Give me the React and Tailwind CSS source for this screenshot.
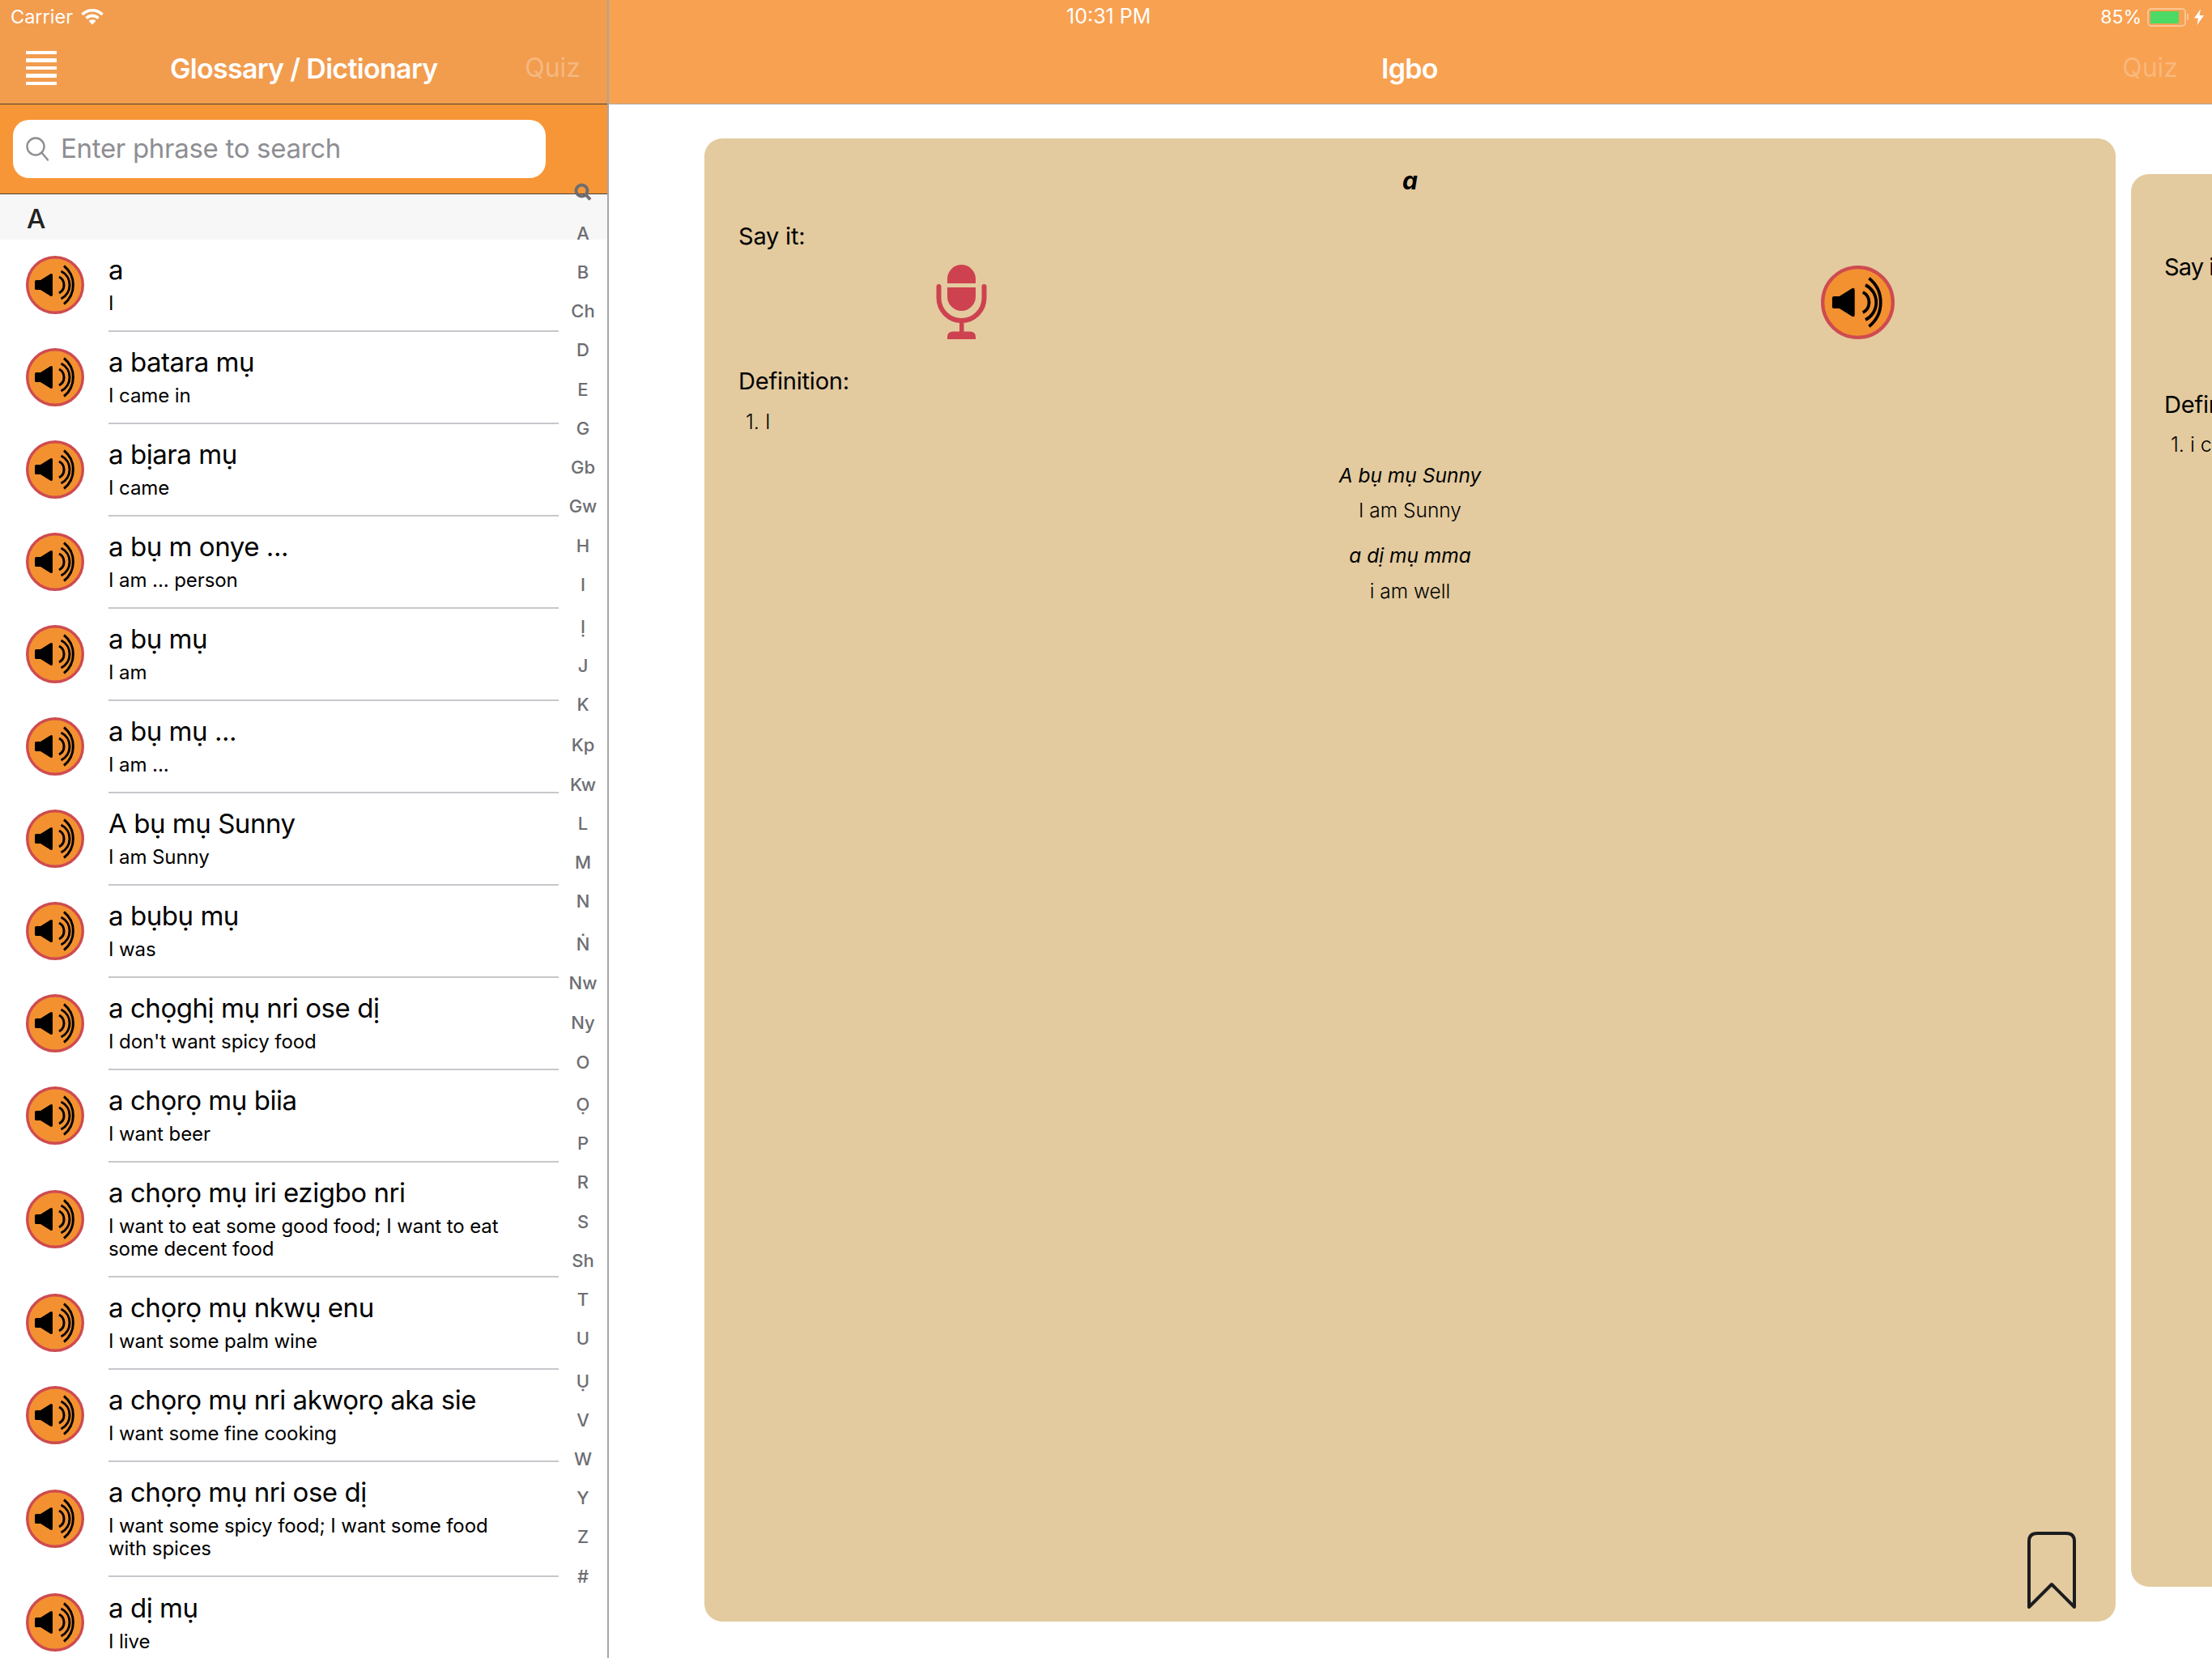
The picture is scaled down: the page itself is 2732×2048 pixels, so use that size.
import React from "react";

const rows = [
  { t: "a", s: ["I"], h: "h-[114px]" },
  { t: "a batara mụ", s: ["I came in"], h: "h-[114px]" },
  { t: "a bịara mụ", s: ["I came"], h: "h-[114px]" },
  { t: "a bụ m onye ...", s: ["I am ... person"], h: "h-[114px]" },
  { t: "a bụ mụ", s: ["I am"], h: "h-[114px]" },
  { t: "a bụ mụ ...", s: ["I am ..."], h: "h-[114px]" },
  { t: "A bụ mụ Sunny", s: ["I am Sunny"], h: "h-[114px]" },
  { t: "a bụbụ mụ", s: ["I was"], h: "h-[114px]" },
  { t: "a chọghị mụ nri ose dị", s: ["I don't want spicy food"], h: "h-[114px]" },
  { t: "a chọrọ mụ biia", s: ["I want beer"], h: "h-[114px]" },
  { t: "a chọrọ mụ iri ezigbo nri", s: ["I want to eat some good food; I want to eat", "some decent food"], h: "h-[142px]" },
  { t: "a chọrọ mụ nkwụ enu", s: ["I want some palm wine"], h: "h-[114px]" },
  { t: "a chọrọ mụ nri akwọrọ aka sie", s: ["I want some fine cooking"], h: "h-[114px]" },
  { t: "a chọrọ mụ nri ose dị", s: ["I want some spicy food; I want some food", "with spices"], h: "h-[142px]" },
  { t: "a dị mụ", s: ["I live"], h: "h-[114px]" },
];

const index = ["A","B","Ch","D","E","G","Gb","Gw","H","I","Ị","J","K","Kp","Kw","L","M","N","Ṅ","Nw","Ny","O","Ọ","P","R","S","Sh","T","U","Ụ","V","W","Y","Z","#"];
const dotted = ["Ị", "Ṅ", "Ọ", "Ụ"];
const wide = ["Kp", "Ny"];

function Speaker({ className }) {
  return (
    <svg viewBox="0 0 72 72" className={className}>
      <circle cx="36" cy="36" r="34.3" fill="#F39130" stroke="#CE4B50" strokeWidth="3.4" />
      <path d="M11 31.5 Q11 30 13 30 L18 30 L30 22.5 Q33 21 33 24 L33 48 Q33 51 30 49.5 L18 42 L13 42 Q11 42 11 40.5 Z" fill="#000" />
      <g fill="none" stroke="#000" strokeWidth="3">
        <path d="M41 26 A11.3 11.3 0 0 1 41 46" />
        <path d="M43.5 19 A19 19 0 0 1 43.5 53" />
        <path d="M47 12.5 A30 30 0 0 1 47 59.5" />
      </g>
    </svg>
  );
}

function Mic() {
  return (
    <svg viewBox="0 0 64 92" className="w-[64px] h-[92px]" fill="#CE4250">
      <path d="M14 23 V17.5 A17.5 17.5 0 0 1 49 17.5 V23 Z" />
      <path d="M14 28 H49 V39.5 A17.5 17.5 0 0 1 14 39.5 Z" />
      <path d="M3.5 27 V41 A28 28 0 0 0 59.5 41 V27" fill="none" stroke="#CE4250" strokeWidth="6" strokeLinecap="round" />
      <rect x="29" y="70" width="5.5" height="14" />
      <path d="M14 92 V89 Q14 82.5 21 82.5 H42 Q49 82.5 49 89 V92 Z" />
    </svg>
  );
}

function Bookmark() {
  return (
    <svg viewBox="0 0 60 96" className="w-[60px] h-[96px]" fill="none" stroke="#1D1D20" strokeWidth="4" strokeLinejoin="round" strokeLinecap="round">
      <path d="M2 93 V12 Q2 2 12 2 H48 Q58 2 58 12 V93 L30 65 Z" />
    </svg>
  );
}

function Hamburger() {
  return (
    <div className="flex flex-col gap-[5px] w-[38px]">
      {[0, 1, 2, 3, 4].map((i) => (
        <div key={i} className="h-[4.5px] bg-white" />
      ))}
    </div>
  );
}

export default function App() {
  return (
    <div className="relative w-[2732px] h-[2048px] overflow-hidden flex bg-white text-black font-['Inter','Noto_Sans',sans-serif]">
      {/* Sidebar */}
      <div className="relative w-[752px] h-full border-r-2 border-[#A6A6A6] flex flex-col overflow-hidden shrink-0">
        <div className="h-[129px] bg-[#F29C4E] border-b border-[#4A3F35] flex flex-col shrink-0">
          <div className="h-[42px] flex items-center pl-[13px] text-white text-[23.5px] gap-[10px]">
            <span>Carrier</span>
            <svg viewBox="0 0 28 20" className="w-[28px] h-[20px]" fill="none" stroke="#fff" strokeWidth="3.6">
              <path d="M1.5 7 A17.5 17.5 0 0 1 26.5 7" />
              <path d="M6.5 11.5 A10.5 10.5 0 0 1 21.5 11.5" />
              <path d="M14 19.5 L9.5 14.8 A6.5 6.5 0 0 1 18.5 14.8 Z" fill="#fff" stroke="none" />
            </svg>
          </div>
          <div className="flex-1 flex items-center pl-[32px] pb-[2px] relative">
            <Hamburger />
            <span className="ml-[140px] text-white text-[34px] font-semibold tracking-[-0.7px]">Glossary / Dictionary</span>
            <span className="ml-auto mr-[33px] text-[32px] text-white/30">Quiz</span>
          </div>
        </div>
        <div className="h-[111px] bg-[#F79637] border-b border-[#4A3F35] shrink-0 flex items-start pl-[16px] pt-[19px]">
          <div className="w-[658px] h-[72px] bg-white rounded-[20px] flex items-center pl-[16px]">
            <svg viewBox="0 0 28 30" className="w-[28px] h-[30px]" fill="none" stroke="#8E8E93" strokeWidth="2.4">
              <circle cx="12" cy="12" r="10.5" />
              <path d="M19.5 19.5 L27 28.5" strokeLinecap="round" />
            </svg>
            <span className="ml-[15px] text-[33px] text-[#8E8E93] tracking-[-0.3px]">Enter phrase to search</span>
          </div>
        </div>
        <div className="h-[56px] bg-[#F7F7F7] shrink-0 flex items-center pl-[33px] pt-[5px] text-[33px] font-medium text-[#222]">A</div>
        {rows.map((r, i) => (
          <div key={i} className={`flex shrink-0 pl-[32px] ${r.h}`}>
            <Speaker className="w-[72px] h-[72px] self-center shrink-0 mb-[3px]" />
            <div className={`ml-[30px] w-[556px] h-full flex flex-col justify-center pb-[3.5px] ${i < rows.length - 1 ? "border-b-2 border-[#C8C7CC]" : ""}`}>
              <div className="text-[33px] leading-[44px] tracking-[-0.45px] whitespace-nowrap mb-[5.5px]">{r.t}</div>
              {r.s.map((l, j) => (
                <div key={j} className="text-[24px] leading-[28.5px] tracking-[-0.08px] whitespace-nowrap">{l}</div>
              ))}
            </div>
          </div>
        ))}
        {/* Section index overlay */}
        <div className="absolute left-[680px] top-[226px] w-[80px] flex flex-col items-center text-[22px] text-[#6D6D72] font-medium">
          <div className="h-[24px] w-full flex justify-center">
            <svg viewBox="0 0 22 22" className="w-[22px] h-[22px]" fill="none" stroke="#6D6D72" strokeWidth="4">
              <circle cx="9.5" cy="9.5" r="7" />
              <path d="M14.5 14.5 L20 20.5" />
            </svg>
          </div>
          <div className="h-[14px]" />
          {index.map((c) => (
            <div
              key={c}
              className={`flex items-center justify-center ${dotted.includes(c) ? "h-[52px] pt-[4px]" : wide.includes(c) ? "h-[50px]" : "h-[48.25px]"}`}
            >
              {c}
            </div>
          ))}
        </div>
      </div>

      {/* Detail pane */}
      <div className="flex-1 min-w-0 h-full flex flex-col">
        <div className="h-[129px] bg-[#F8A151] border-b border-[#A9A9A9] shrink-0 flex flex-col relative">
          <div className="h-[42px] flex items-center relative text-white text-[23px]">
            <span className="ml-[565px] text-[25px]">10:31 PM</span>
            <div className="ml-auto flex items-center pr-[10px]">
              <span className="text-[23px]">85%</span>
              <div className="ml-[7px] w-[48px] h-[23px] border-2 border-white/40 rounded-[5px] p-[2px]">
                <div className="w-[35px] h-full bg-[#4CD964]" />
              </div>
              <div className="w-[2px] h-[8px] bg-white/40 ml-[1px]" />
              <svg viewBox="0 0 12 20" className="ml-[7px] w-[12px] h-[20px]" fill="#fff">
                <path d="M8 0 L0 11.5 H5 L3.5 20 L12 8 H6.5 Z" />
              </svg>
            </div>
          </div>
          <div className="flex-1 flex items-center pb-[2px]">
            <span className="ml-[954px] text-[34px] font-semibold text-white tracking-[-0.7px]">Igbo</span>
            <span className="ml-auto mr-[42px] text-[32px] text-white/25">Quiz</span>
          </div>
        </div>
        <div className="flex-1 min-h-0 flex items-start pt-[42px] pl-[118px] gap-[19px] overflow-hidden">
          <div className="w-[1743px] h-[1832px] shrink-0 bg-[#E3CB9F] rounded-[22px] flex flex-col">
            <div className="pt-[32px] text-center font-bold italic text-[30px] leading-[40px]">a</div>
            <div className="mt-[29px] pl-[42px] text-[29px] tracking-[-0.2px] leading-[40px]">Say it:</div>
            <div className="mt-[15px] flex items-start pl-[286px]">
              <Mic />
              <Speaker className="ml-[1029px] mt-[1px] w-[91px] h-[91px]" />
            </div>
            <div className="mt-[32px] pl-[42px] text-[29px] tracking-[-0.2px] leading-[40px]">Definition:</div>
            <div className="mt-[11px] pl-[51px] text-[25px] leading-[38px] font-light">1. I</div>
            <div className="mt-[29px] text-center text-[24.5px] italic leading-[36px]">A bụ mụ Sunny</div>
            <div className="mt-[7px] text-center text-[24.5px] font-light leading-[36px]">I am Sunny</div>
            <div className="mt-[20px] text-center text-[24.5px] italic leading-[36px]">a dị mụ mma</div>
            <div className="mt-[8px] text-center text-[24.5px] font-light leading-[36px]">i am well</div>
            <div className="mt-auto self-end mr-[49px] mb-[15px]">
              <Bookmark />
            </div>
          </div>
          <div className="mt-[44px] w-[400px] h-[1745px] shrink-0 bg-[#E3CB9F] rounded-l-[22px] flex flex-col pl-[41px] whitespace-nowrap">
            <div className="mt-[95px] text-[29px] tracking-[-0.9px] leading-[40px]">Say it:</div>
            <div className="mt-[130px] text-[29px] tracking-[-0.2px] leading-[40px]">Definition:</div>
            <div className="mt-[10px] pl-[8px] text-[25px] leading-[38px] font-light">1. i came in</div>
          </div>
        </div>
      </div>
    </div>
  );
}
